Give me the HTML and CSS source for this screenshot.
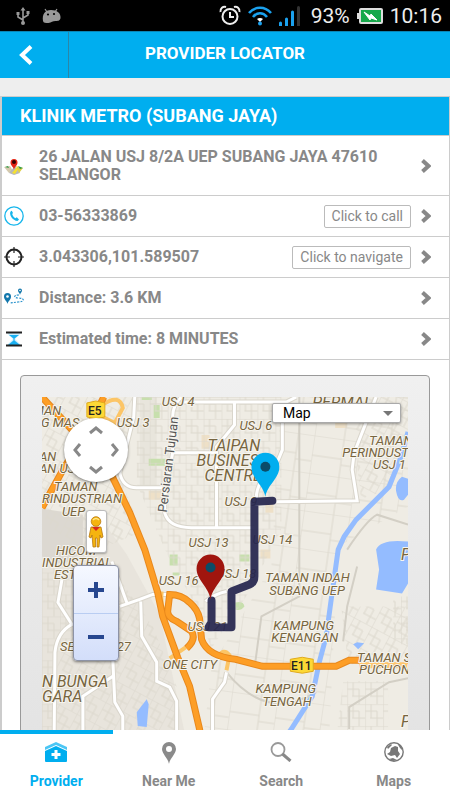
FILE: index.html
```html
<!DOCTYPE html>
<html lang="en">
   <head>
      <meta charset="UTF-8">
      <meta name="viewport" content="width=device-width, initial-scale=1">
      <title>Provider Locator</title>
      <link rel="stylesheet" href="styles.css">
   </head>
   <body>
      <div class="status-bar">
         <div class="status-left">
            <svg width="14" height="18" viewBox="0 0 14 18" fill="none" stroke="#999" stroke-width="1.6">
               <path d="M7 3v13M7 13L2 10V7M7 11l5-3V5"/>
               <path d="M7 0l2.500 3.500h-5zM.5 5h3v3h-3zM10.500 4h3v3h-3z" fill="#999" stroke="none"/>
               <circle cx="7" cy="16" r="2" fill="#999" stroke="none"/>
            </svg>
            <svg width="19" height="15" viewBox="0 0 19 15" fill="#999">
               <path d="M1 13C0 6 3 2 9 2s10 3 9.500 8c-.5 3-3 3-5 3-3 0-4 1.500-7 2-3 0-5 0-5.500-2z"/>
               <path d="M5 4L3 1M13 4l2-3" stroke="#999" stroke-width="1.2"/>
               <circle cx="6" cy="6.500" r="1.100" fill="#000"/><circle cx="12" cy="6" r="1.100" fill="#000"/>
            </svg>
         </div>
         <div class="status-right">
            <svg width="22" height="21" viewBox="0 0 22 21" fill="none" stroke="#eee" stroke-width="2">
               <circle cx="11" cy="11.500" r="7.500"/>
               <path d="M11 7v5h4M1.500 7C1 3.500 4 1 7 2M20.500 7C21 3.500 18 1 15 2"/>
            </svg>
            <svg width="24" height="20" viewBox="0 0 24 20" fill="none" stroke="#1ba1ee" stroke-width="2.600">
               <path d="M1 7c6-7 16-7 22 0M5 11c4-5 10-5 14 0"/>
               <path d="M9 13c1.500-1.500 4.500-1.500 6 0l-3 3z" fill="#fff" stroke="none"/>
               <circle cx="12" cy="17.500" r="2" fill="#1ba1ee" stroke="none"/>
            </svg>
            <svg width="21" height="20" viewBox="0 0 21 20" fill="#1ba1ee">
               <path d="M0 17a1.500 1.500 0 0 1 3 0v3H0zM6 13a1.500 1.500 0 0 1 3 0v7H6zM12 6a1.500 1.500 0 0 1 3 0v14h-3z"/>
               <path d="M18 1.500a1.500 1.500 0 0 1 3 0V20h-3z" fill="#333"/>
            </svg>
            <span class="status-text battery-level">93%</span>
            <svg width="26" height="16" viewBox="0 0 26 16">
               <path d="M0 5h2v6H0z" fill="#ddd"/>
               <rect x="3" y="1" width="22" height="14" rx="1" fill="#17a84b" stroke="#ddd" stroke-width="2"/>
               <path d="M7 4l6 4 1-2 6 6-6-2-1 2z" fill="#fff" stroke="#fff"/>
            </svg>
            <span class="status-text">10:16</span>
         </div>
      </div>

      <header class="header">
         <button type="button" class="btn-back" aria-label="Back">
            <svg width="14" height="20" viewBox="0 0 14 20" fill="none" stroke="#fff" stroke-width="4"><path d="M12 1.500L3 10l9 8.500"/></svg>
         </button>
         <h1>PROVIDER LOCATOR</h1>
      </header>

      <main class="content">
         <section class="provider">
            <h2>KLINIK METRO (SUBANG JAYA)</h2>
            <ul class="detail-list">
               <li class="detail detail-address">
                  <svg class="detail-icon" viewBox="0 0 20 20">
                     <path d="M0 11l6-1 3 5-4 2z" fill="#d4c9ad"/>
                     <path d="M5 17l6-7 5 7-6 2z" fill="#b8b8b8"/>
                     <path d="M8 17l5-6 2 1-4 6z" fill="#f5e12e"/>
                     <path d="M12 10l7 2-4 5z" fill="#e0cf45"/>
                     <path d="M14 10l5 2-3 1zM1 11l3-1 1 2z" fill="#2f9a48"/>
                     <path d="M10 14c0-3-3.500-4-3.500-7.500a3.500 3.500 0 0 1 7 0C13.500 10 10 11 10 14z" fill="#e42313"/>
                     <circle cx="10" cy="6" r="2" fill="#300"/>
                  </svg>
                  <span class="detail-text">26 JALAN USJ 8/2A UEP SUBANG JAYA 47610 SELANGOR</span>
                  <svg class="chevron" viewBox="0 0 10 14"><path d="M1.500 1.500L7.500 7l-6 5.500"/></svg>
               </li>
               <li class="detail">
                  <svg class="detail-icon" viewBox="0 0 20 20" fill="none" stroke="#16b6ec">
                     <circle cx="10" cy="10" r="9.200" stroke-width="1.300"/>
                     <path d="M7 5c-3 3 2 10 6.500 10l1.500-1.500-2.200-2.200-1.500 1C9.500 11 8.500 9.500 8.200 8L9 7 7.800 4.700z" fill="#16b6ec" stroke="none"/>
                  </svg>
                  <span class="detail-text">03-56333869</span>
                  <button type="button" class="btn-small">Click to call</button>
                  <svg class="chevron" viewBox="0 0 10 14"><path d="M1.500 1.500L7.500 7l-6 5.500"/></svg>
               </li>
               <li class="detail">
                  <svg class="detail-icon" viewBox="0 0 20 20" fill="none" stroke="#222">
                     <circle cx="10" cy="10" r="7.500" stroke-width="2"/>
                     <path d="M10 0v6M10 14v6M0 10h6M14 10h6" stroke-width="1.200"/>
                  </svg>
                  <span class="detail-text">3.043306,101.589507</span>
                  <button type="button" class="btn-small">Click to navigate</button>
                  <svg class="chevron" viewBox="0 0 10 14"><path d="M1.500 1.500L7.500 7l-6 5.500"/></svg>
               </li>
               <li class="detail">
                  <svg class="detail-icon" viewBox="0 0 20 20">
                     <path d="M3.500 16C3 13 0 12 0 8.500a3.500 3.500 0 0 1 7 0C7 12 4 13 3.500 16z" fill="#1377ac"/>
                     <path d="M16 7c0-2-2-2.500-2-4.500a2 2 0 0 1 4 0C18 4.500 16 5 16 7z" fill="#1377ac"/>
                     <circle cx="3.500" cy="8.500" r="1.300" fill="#fff"/><circle cx="16" cy="2.500" r=".8" fill="#fff"/>
                     <path d="M15 7c-6 0-5 3-1 3 7 0 7 4 0 4l-8 1" fill="none" stroke="#2691cb" stroke-width="1.200" stroke-dasharray="2 1.200"/>
                  </svg>
                  <span class="detail-text">Distance: 3.6 KM</span>
                  <svg class="chevron" viewBox="0 0 10 14"><path d="M1.500 1.500L7.500 7l-6 5.500"/></svg>
               </li>
               <li class="detail">
                  <svg class="detail-icon" viewBox="0 0 20 20">
                     <path d="M3 4h14l-6 6 6 6H3l6-6z" fill="#c9ecfb"/>
                     <path d="M5 6h10l-4.500 3.500v2L16 16H4l5.500-4.500v-2z" fill="#19b0f2"/>
                     <path d="M2 2.500h16v2H2zM2 15.500h16v2H2z" fill="#222"/>
                  </svg>
                  <span class="detail-text">Estimated time: 8 MINUTES</span>
                  <svg class="chevron" viewBox="0 0 10 14"><path d="M1.500 1.500L7.500 7l-6 5.500"/></svg>
               </li>
            </ul>

            <div class="map-panel">
               <div class="map">
                  <svg class="map-canvas" viewBox="0 0 367 360" preserveAspectRatio="xMinYMin slice">
                     <defs>
                        <pattern id="blocks" width="18" height="22" patternUnits="userSpaceOnUse">
                           <path d="M0 0h18M0 7h12M5 14h13M0 0v22M6 0v14M12 7v15" class="street"/>
                        </pattern>
                        <pattern id="blocks-tilt" width="20" height="24" patternUnits="userSpaceOnUse" patternTransform="rotate(28)">
                           <path d="M0 0h20M0 8h14M6 16h14M0 0v24M7 0v16M14 8v16" class="street"/>
                        </pattern>
                        <pattern id="blocks-wide" width="46" height="38" patternUnits="userSpaceOnUse" patternTransform="rotate(8)">
                           <path d="M0 0h46M0 20h30M0 0v38M30 0v38M30 26h16" class="street"/>
                        </pattern>
                     </defs>
                     <rect width="367" height="360" fill="#efece4"/>
                     <!-- built up areas -->
                     <path d="M0 115l60 8 25 35 33 60 30 142H0z" fill="#e8e4dc"/>
                     <path d="M0 112l41 6v38l-20 12-21-8z" fill="#dcd8d1"/>
                     <path d="M98 0h17v92h-17z" fill="#e8e5dc"/>
                     <path d="M107 62h17v7h-17zM112 8h6v13h-6zM100 0h10v3h-10zM128 158h8v11h-8zM131 176h7v3h-7zM198 158h10v7h-10zM194 206q8-2 9 4-4 5-9 3z" fill="#c7dfad"/>
                     <path d="M107 94h13v9h-13zM160 38h8v14h-8zM219 153h10v9h-10zM294 20h12v11h-12zM224 104h8v12h-8z" fill="#eee0c7"/>
                     <!-- minor streets -->
                     <path d="M95 0h145v132l-30 60-40 60-20-50-25-45-30-70z" fill="url(#blocks)"/>
                     <path d="M0 0h92L80 85l20 50-60 25-40-40z" fill="url(#blocks-tilt)"/>
                     <path d="M0 170l35 5v60L12 260v100H0z" fill="url(#blocks)"/>
                     <path d="M16 260l60-80 35 50 24 60v70H12z" fill="url(#blocks-tilt)"/>
                     <path d="M240 0h127v110l-70 40-10 210H160l10-90 60-100z" fill="url(#blocks-wide)"/>
                     <path d="M316 0h51v32l-17 60-30 10-6-50zM300 210h67v58h-60z" fill="url(#blocks-tilt)"/>
                     <path d="M302 285h45v75h-54zM352 200h15v48h-15z" fill="url(#blocks)"/>
                     <path d="M258 0v200l-38 20-6 45M316 170l-10 40-4 35M308 333v-22l40-25 19-4M185 276q40 50 90 20M306 153q20-30 30-35l31 10" class="lane"/>
                     <!-- water -->
                     <path d="M367 35l-7 25-12 30-33 33-12 17-6 13-7 50-5 37-7 26-7 34-21 33-20 27" class="river"/>
                     <path d="M361 80q-7 5-6 14 2 12 8 9l4-5V82zM335 193l3-20-3-20q5-11 32-8v42l-6 10zM312 248l4-2 7 1-6 6zM105 303l2 5-2 23-9-1-1-14z" fill="#94bcff"/>
                     <!-- main roads, a grey casing under white -->
                     <path d="M93 0l-1 20-4 16-10 40q3 15 17 15h26M140 0q-9 8-9 20v36l-8 44v16q4 15 27 15h63M131 56h43M140 5h105L255 0M193 6v22l-18 22v81M241 5v48l-5 12q-23 20-21 40M235 105l81-1-5-31 2-17L335 0M20 183l-4 23 14 22q-15 8-17 28l-1 104M70 165l15 41M78 210l20-7 13-5h17M99 205l1 35 15 26v19l13 6 7 14v55M71 263l2 43 8 14v40M71 280l-30 20v60M164 205q10-8 21-10M185 276l-2 10-12 17v57" class="road-case"/>
                     <path d="M93 0l-1 20-4 16-10 40q3 15 17 15h26M140 0q-9 8-9 20v36l-8 44v16q4 15 27 15h63M131 56h43M140 5h105L255 0M193 6v22l-18 22v81M241 5v48l-5 12q-23 20-21 40M235 105l81-1-5-31 2-17L335 0M20 183l-4 23 14 22q-15 8-17 28l-1 104M70 165l15 41M78 210l20-7 13-5h17M99 205l1 35 15 26v19l13 6 7 14v55M71 263l2 43 8 14v40M71 280l-30 20v60M164 205q10-8 21-10M185 276l-2 10-12 17v57" class="road"/>
                     <!-- highways -->
                     <path d="M60 8q18-12 21 3l-8 15-14-7M185 274l3-15q-6-8-12 2M120 195q-2 20 8 25M128 262l16-11" class="ramp"/>
                     <path d="M318 269h49" stroke="#ffc56b" stroke-width="6"/>
                     <path d="M0 0l30 33 41 48 17 35 15 37 13 43 5 24 15 41 12 29 10 43 4 27M62 0L48 28 21 73 0 111M145 252q10-9 5-17l-15-10q-9-4-9-10l2-17q12 0 20 8 8 7 10 16l2 21q6 17 34 20l27 7h74l13-6h10" class="highway-case"/>
                     <path d="M0 0l30 33 41 48 17 35 15 37 13 43 5 24 15 41 12 29 10 43 4 27M62 0L48 28 21 73 0 111M145 252q10-9 5-17l-15-10q-9-4-9-10l2-17q12 0 20 8 8 7 10 16l2 21q6 17 34 20l27 7h74l13-6h10" class="highway"/>
                     <!-- place names -->
                     <g class="place">
                        <text x="-9" y="18">MAN</text><text x="-1" y="30">G MAS</text>
                        <text x="120" y="9">USJ 4</text><text x="75" y="30">USJ 3</text>
                        <text x="-14" y="64">MAN</text><text x="-14" y="76">MAN USJ</text>
                        <text x="12" y="94">TAMAN</text><text x="0" y="106">RINDUSTRIAN</text><text x="20" y="119">UEP</text>
                        <text x="14" y="158">HICOM</text><text x="0" y="170">INDUSTRIAL</text><text x="12" y="183">ESTATE</text>
                        <text x="198" y="33">USJ 6</text><text x="183" y="109">USJ 9</text>
                        <text x="147" y="150">USJ 13</text><text x="211" y="147">USJ 14</text>
                        <text x="117" y="189">USJ 16</text><text x="175" y="182">USJ 18</text>
                        <text x="146" y="235">USJ 21</text><text x="18" y="255">SEKSYEN 27</text>
                        <text x="121" y="273">ONE CITY</text>
                        <text x="328" y="48">TAMAN</text><text x="301" y="60">PERINDUSTRIAN</text><text x="332" y="72">USJ 1</text>
                        <text x="224" y="186">TAMAN INDAH</text><text x="228" y="199">SUBANG UEP</text>
                        <text x="232" y="234">KAMPUNG</text><text x="230" y="246">KENANGAN</text>
                        <text x="214" y="297">KAMPUNG</text><text x="221" y="310">TENGAH</text>
                        <text x="316" y="266">TAMAN SRI</text><text x="318" y="278">PUCHONG</text>
                     </g>
                     <g class="place place-large">
                        <text x="166" y="54">TAIPAN</text><text x="155" y="69">BUSINESS</text><text x="163" y="84">CENTRE</text>
                        <text x="271" y="11">PERMAI</text>
                        <text x="0" y="291">N BUNGA</text><text x="0" y="306">GARA</text>
                        <text x="360" y="163">P</text><text x="360" y="331">P</text>
                     </g>
                     <text class="street-name" transform="translate(125 116) rotate(-83)">Persiaran Tujuan</text>
                     <g class="shield">
                        <path d="M45 6l9-2 9 2v14l-9 2-9-2z"/><text x="53" y="18">E5</text>
                        <path d="M249 263l12-2 11 2v12l-11 2-12-2z"/><text x="260" y="274">E11</text>
                     </g>
                     <!-- route -->
                     <path d="M231 104l-18 1v75q0 6-5 8l-18 7v36h-23l3-5v-22" class="route"/>
                     <path d="M224 100c-2-12-14-18-14-30a14 14 0 0 1 28 0c0 12-12 18-14 30z" fill="#00aeef"/>
                     <circle cx="224" cy="70" r="5" fill="#0b4d68"/>
                     <path d="M169 203c-2-13-14-19-14-31a14 14 0 0 1 28 0c0 12-12 18-14 31z" fill="#a0150e"/>
                     <circle cx="169" cy="171" r="5" fill="#0b4d68"/>
                  </svg>

                  <select class="map-type" aria-label="Map type">
                     <option>Map</option>
                     <option>Satellite</option>
                  </select>

                  <div class="map-controls">
                     <div class="pan">
                        <button type="button" class="pan-up" aria-label="Pan up"><svg viewBox="0 0 16 10"><path d="M2 8l6-5 6 5"/></svg></button>
                        <button type="button" class="pan-left" aria-label="Pan left"><svg viewBox="0 0 10 16"><path d="M8 2L3 8l5 6"/></svg></button>
                        <button type="button" class="pan-right" aria-label="Pan right"><svg viewBox="0 0 10 16"><path d="M2 2l5 6-5 6"/></svg></button>
                        <button type="button" class="pan-down" aria-label="Pan down"><svg viewBox="0 0 16 10"><path d="M2 2l6 5 6-5"/></svg></button>
                     </div>
                     <button type="button" class="pegman" aria-label="Street view">
                        <svg width="16" height="32" viewBox="0 0 16 32" fill="#f5b40f" stroke="#b87812" stroke-width=".8">
                           <path d="M3 11h10l2 10-2 1-1-3-1 12H9V22H7.500v9H5L4 19l-1 3-2-1z"/>
                           <path d="M4 11h8l-4 4z" fill="#d8291c" stroke="none"/>
                           <circle cx="8" cy="5.500" r="4.800"/>
                           <path d="M5 4q3-3 6 0" fill="none" stroke="#ffe484" stroke-width="1.500"/>
                        </svg>
                     </button>
                     <div class="zoom">
                        <button type="button" aria-label="Zoom in"><svg viewBox="0 0 16 16"><path d="M0 8h16M8 0v16"/></svg></button>
                        <button type="button" aria-label="Zoom out"><svg viewBox="0 0 16 16"><path d="M0 8h16"/></svg></button>
                     </div>
                  </div>
               </div>
            </div>
         </section>
      </main>

      <nav class="tabs">
         <a href="#provider" class="tab active">
            <svg width="22" height="20" viewBox="0 0 22 20" fill="#00aeef">
               <path d="M0 5l11-5 11 5v3L11 3 0 8z" opacity=".7"/>
               <path d="M0 9l11-5 11 5v10q0 1-1 1H1q-1 0-1-1z"/>
               <path d="M9.500 8h3v3h3v3h-3v3h-3v-3h-3v-3h3z" fill="#fff"/>
            </svg>
            <span>Provider</span>
         </a>
         <a href="#near" class="tab">
            <svg width="14" height="22" viewBox="0 0 14 22" fill="#8a8a8a">
               <path fill-rule="evenodd" d="M7 22C6 16 0 12 0 7a7 7 0 0 1 14 0c0 5-6 9-7 15zM7 4a3 3 0 1 0 0 6 3 3 0 0 0 0-6z"/>
            </svg>
            <span>Near Me</span>
         </a>
         <a href="#search" class="tab">
            <svg width="22" height="20" viewBox="0 0 22 20" fill="none" stroke="#999">
               <circle cx="8" cy="7.500" r="6.500" stroke-width="1.800"/>
               <path d="M12.500 12l8 7" stroke="#888" stroke-width="3"/>
            </svg>
            <span>Search</span>
         </a>
         <a href="#maps" class="tab">
            <svg width="20" height="20" viewBox="0 0 20 20">
               <circle cx="10" cy="10" r="9.200" fill="#fff" stroke="#777" stroke-width="1.400"/>
               <path d="M3 12l3-2 1-4 4-2 3 1v4l2 3-3 4-2-3-4 1zM3 5l4-3 1 1-4 4zM13 1l4 3 2 5-3-3zM5 17l4-1 4 2-4 1z" fill="#777"/>
            </svg>
            <span>Maps</span>
         </a>
      </nav>
   </body>
</html>
```
FILE: styles.css
```css
* {
box-sizing: border-box;
}
body {
margin: 0;
height: 100vh;
display: flex;
flex-direction: column;
overflow: hidden;
font-family: Roboto, "Liberation Sans", sans-serif;
background-color: #eee;
color: #888;
}
button {
font-family: inherit;
padding: 0;
cursor: pointer;
}
h1, h2, ul {
margin: 0;
padding: 0;
}

/* phone status bar */
.status-bar {
flex: none;
display: flex;
justify-content: space-between;
align-items: center;
height: 31px;
padding: 0 8px 0 16px;
background-color: #000;
}
.status-left {
display: flex;
align-items: center;
gap: 12px;
}
.status-right {
display: flex;
align-items: center;
gap: 7px;
}
.status-text {
color: #eee;
font-size: 21px;
line-height: 32px;
}
.battery-level {
margin-left: 4px;
}

.header {
flex: none;
display: flex;
height: 47px;
background-color: #00aeef;
border-top: 1px solid #0a85b5;
}
.btn-back {
width: 69px;
padding-right: 17px;
background: none;
border: 0;
border-right: 1px solid #2a86a8;
}
.btn-back svg {
vertical-align: middle;
}
.header h1 {
flex: 1;
padding-right: 69px;
color: #fff;
font-size: 17px;
line-height: 43px;
text-align: center;
}

.content {
flex: 1;
min-height: 0;
overflow: hidden;
padding-top: 18px;
}
.provider {
background-color: #fff;
border: 1px solid #ccc;
border-left-width: 2px;
}
.provider h2 {
padding: 0 18px;
background-color: #00aeef;
border-bottom: 1px solid #ccc;
color: #fff;
font-size: 18px;
line-height: 38px;
}

.detail-list {
list-style: none;
}
.detail {
display: flex;
align-items: center;
height: 41px;
padding: 0 18px 0 2px;
border-bottom: 1px solid #ccc;
font-size: 16px;
line-height: 18px;
font-weight: bold;
}
.detail-address {
height: 60px;
}
.detail-icon {
flex: none;
width: 20px;
height: 20px;
margin-right: 15px;
}
.detail-text {
flex: 1;
}
.chevron {
flex: none;
width: 10px;
height: 14px;
margin-left: 10px;
fill: none;
stroke: #888;
stroke-width: 4;
}
.btn-small {
height: 23px;
padding: 0 7px;
background-color: #fff;
border: 1px solid #bbb;
border-radius: 2px;
color: #888;
font-size: 14px;
line-height: 21px;
}

/* map */
.map-panel {
margin: 15px 19px 15px 18px;
padding: 21px;
border: 1px solid #999;
border-radius: 4px;
background: linear-gradient(#f0f0f0, #e2e2e2);
}
.map {
position: relative;
overflow: hidden;
}
.map-canvas {
display: block;
width: 100%;
}
.street {
fill: none;
stroke: #dcd8cd;
stroke-width: 1;
}
.lane {
fill: none;
stroke: #d3cfc5;
stroke-width: 2;
}
.river {
fill: none;
stroke: #94bcff;
stroke-width: 5;
}
.road-case {
fill: none;
stroke: #d9d5cb;
stroke-width: 5;
}
.road {
fill: none;
stroke: #fff;
stroke-width: 3;
}
.ramp {
fill: none;
stroke: #fcc566;
stroke-width: 4;
}
.highway-case {
fill: none;
stroke: #e8881c;
stroke-width: 7;
}
.highway {
fill: none;
stroke: #fd9e26;
stroke-width: 5;
}
.route {
fill: none;
stroke: #26264f;
stroke-width: 8;
stroke-linecap: round;
stroke-linejoin: round;
opacity: .93;
}
.place {
fill: #776540;
stroke: #f6f4ee;
stroke-width: 2;
paint-order: stroke;
font-size: 13px;
font-style: italic;
}
.place-large {
font-size: 16px;
}
.street-name {
fill: #555;
stroke: #f6f4ee;
stroke-width: 2;
paint-order: stroke;
font-size: 13px;
}
.shield path {
fill: #fdd835;
stroke: #e0aa1c;
}
.shield text {
fill: #222;
font-size: 12px;
font-weight: 500;
text-anchor: middle;
}

.map-type {
position: absolute;
top: 6px;
right: 7px;
width: 129px;
height: 20px;
padding: 0 10px;
appearance: none;
border: 1px solid #aaa;
border-radius: 2px;
background: #fff url("data:image/svg+xml,%3Csvg xmlns='http://www.w3.org/2000/svg' viewBox='0 0 10 5'%3E%3Cpath d='M0 0h10L5 5z' fill='%23777'/%3E%3C/svg%3E") no-repeat right 7px center / 10px 5px;
box-shadow: 0 1px 3px rgba(0, 0, 0, .4);
color: #000;
font-family: inherit;
font-size: 14px;
}
.map-controls {
position: absolute;
top: 21px;
left: 22px;
display: flex;
flex-direction: column;
align-items: center;
}
.pan {
display: grid;
grid-template: "u u" 20px "l r" 24px "d d" 20px / 32px 32px;
width: 64px;
height: 64px;
border-radius: 50%;
background-color: #fff;
box-shadow: 0 1px 3px rgba(0, 0, 0, .5);
}
.pan button {
display: grid;
place-items: center;
background: none;
border: 0;
}
.pan svg {
width: 16px;
height: 16px;
fill: none;
stroke: #888;
stroke-width: 3;
}
.pan-up {
grid-area: u;
padding-top: 4px;
}
.pan-down {
grid-area: d;
padding-bottom: 4px;
}
.pan-left {
grid-area: l;
padding-right: 6px;
}
.pan-right {
grid-area: r;
padding-left: 6px;
}
.pegman {
display: grid;
place-items: center;
width: 21px;
height: 43px;
margin-top: 28px;
border: 1px solid #bbb;
border-radius: 3px;
background-color: #fff;
box-shadow: 0 1px 2px rgba(0, 0, 0, .3);
}
.zoom {
width: 46px;
margin-top: 12px;
border: 1px solid #8d93a6;
border-radius: 4px;
background: linear-gradient(#f5f8ff, #d3defa);
box-shadow: 0 1px 3px rgba(0, 0, 0, .5);
}
.zoom button {
display: grid;
place-items: center;
width: 100%;
height: 47px;
border: 0;
background: none;
}
.zoom button + button {
border-top: 1px solid #b9cdf2;
}
.zoom svg {
width: 16px;
height: 16px;
stroke: #27478f;
stroke-width: 4;
}

/* bottom tabs */
.tabs {
flex: none;
display: grid;
grid-template-columns: repeat(4, 1fr);
height: 70px;
background-color: #fff;
}
.tab {
display: flex;
flex-direction: column;
align-items: center;
justify-content: space-between;
padding: 8px 0 10px;
border-top: 4px solid transparent;
color: #888;
font-size: 14px;
line-height: 18px;
font-weight: bold;
text-decoration: none;
}
.tab.active {
border-top-color: #00aeef;
color: #00aeef;
}
```
